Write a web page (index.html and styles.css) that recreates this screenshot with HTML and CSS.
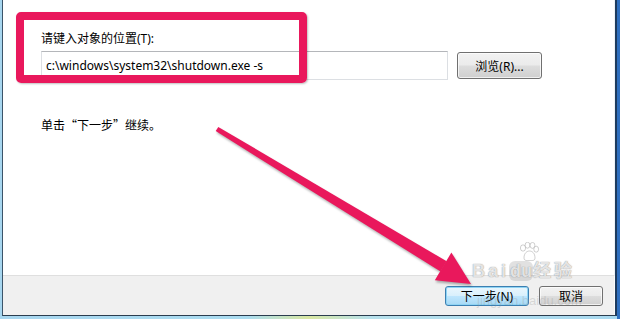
FILE: index.html
```html
<!DOCTYPE html>
<html lang="zh-CN">
<head>
    <meta charset="UTF-8">
    <title>创建快捷方式</title>
    <link rel="stylesheet" href="styles.css">
</head>
<body>
    <div class="screen">
        <div class="dialog">
            <div class="dialog-body">
                <div class="field-label">请键入对象的位置(T):</div>
                <div class="field-row">
                    <div class="textbox">c:\windows\system32\shutdown.exe -s</div>
                    <button class="btn btn-browse">浏览(R)...</button>
                </div>
                <p class="hint">单击“下一步”继续。</p>
            </div>
            <div class="dialog-footer">
                <button class="btn btn-default">下一步(N)</button>
                <button class="btn btn-cancel">取消</button>
            </div>
        </div>

        <!-- 标注 -->
        <div class="mark-box"></div>
        <svg class="mark-arrow" width="620" height="319" viewBox="0 0 620 319">
            <polygon points="215.7,131.1 218.3,126.9 446.7,261.3 440.5,271.5" />
            <polygon points="471,284 451.4,252.6 434.8,280.2" />
        </svg>

        <!-- 水印 -->
        <div class="watermark">
            <svg class="paw" width="22" height="20" viewBox="0 0 22 20">
                <ellipse cx="5" cy="6" rx="2.6" ry="3.2" />
                <ellipse cx="9.5" cy="3.2" rx="2.4" ry="3" />
                <ellipse cx="14.5" cy="3.4" rx="2.4" ry="3" />
                <ellipse cx="18.2" cy="7.2" rx="2.4" ry="3" />
                <path d="M6 16 C6 11 9 9 11.5 9 C14 9 17 11 17 16 C17 19 14 18.5 11.5 18.5 C9 18.5 6 19 6 16 Z" />
            </svg>
            <div class="wm-logo">Bai<span class="wm-du">du</span>经验</div>
            <div class="wm-url">jingyan.baidu.com</div>
        </div>
    </div>
</body>
</html>
```

FILE: styles.css
```css
* {
    box-sizing: border-box;
}

body {
    margin: 0;
    font-family: "Noto Sans", "Noto Sans CJK SC", sans-serif;
    font-size: 12px;
    color: #000;
}

.screen {
    position: relative;
    width: 620px;
    height: 319px;
    overflow: hidden;
    display: flex;
    padding: 0 0 3px 2px;
    border-right: 3px solid #2f6fbf;
    background: linear-gradient(90deg, #a7d6ef 0%, #aadcf0 40%, #d9e7a2 50%, #b7e1ec 60%, #a8d9f0 100%);
}

/* Dialog window */
.dialog {
    flex: 1;
    display: flex;
    flex-direction: column;
    background: #fff;
    border-left: 1px solid #3b5469;
    border-right: 2px solid #1d3b5e;
    border-bottom: 1px solid #2b3d4f;
}

.dialog-body {
    flex: 1;
    padding: 31px 0 0 38px;
    border-right: 1px solid #eef2f6;
}

.field-label {
    line-height: 16px;
    margin-bottom: 4px;
}

.field-row {
    display: flex;
    align-items: center;
    gap: 9px;
}

.textbox {
    width: 407px;
    height: 29px;
    display: flex;
    align-items: center;
    padding-left: 4px;
    border: 1px solid #dcdfe3;
    border-top-color: #b4b6ba;
    background: #fff;
    white-space: pre;
}

.hint {
    margin: 37px 0 0;
    line-height: 16px;
    font-family: "Noto Sans CJK SC", sans-serif;
}

.dialog-footer {
    height: 40px;
    display: flex;
    justify-content: flex-end;
    align-items: flex-start;
    gap: 10px;
    padding: 10px 11px 0 0;
    background: #f0f0f0;
    border-top: 1px solid #dfdfdf;
    border-right: 1px solid #fbfbfb;
}

/* Win7 style buttons */
.btn {
    font: inherit;
    color: #000;
    padding: 0;
    border: 1px solid #707070;
    border-radius: 3px;
    background: linear-gradient(180deg, #f2f2f2 0%, #ebebeb 48%, #dddddd 52%, #cfcfcf 100%);
    box-shadow: inset 0 0 0 1px rgba(255, 255, 255, 0.7);
}

.btn-browse {
    width: 85px;
    height: 27px;
}

.btn-default {
    width: 84px;
    height: 20px;
    border-color: #3c7fb1;
    background: linear-gradient(180deg, #eaf6fd 0%, #d9f0fc 48%, #bee6fd 52%, #a7d9f5 100%);
    box-shadow: inset 0 0 0 1px #8fd4f4;
}

.btn-cancel {
    width: 64px;
    height: 20px;
}

/* Annotations */
.mark-box {
    position: absolute;
    left: 16px;
    top: 12px;
    width: 291px;
    height: 71px;
    border: 8px solid #e9185c;
    border-radius: 5px;
    box-shadow: 1px 1px 2px rgba(0, 0, 0, 0.25);
}

.mark-arrow {
    position: absolute;
    left: 0;
    top: 0;
    fill: #e9185c;
    filter: drop-shadow(1px 2px 1px rgba(0, 0, 0, 0.3));
}

.watermark {
    position: absolute;
    left: 472px;
    top: 242px;
    width: 130px;
    color: rgba(255, 255, 255, 0.75);
    pointer-events: none;
}

.paw {
    display: block;
    margin-left: 46px;
    fill: rgba(255, 255, 255, 0.75);
    stroke: rgba(150, 150, 150, 0.45);
    stroke-width: 1;
}

.wm-logo {
    font-family: "Liberation Sans", "Noto Sans CJK SC", sans-serif;
    font-size: 18px;
    font-weight: bold;
    line-height: 18px;
    letter-spacing: 3px;
    text-shadow: 0 0 1px rgba(120, 120, 120, 0.6), 0 0 1px rgba(120, 120, 120, 0.6);
}

.wm-du {
    background: rgba(170, 170, 170, 0.35);
    border-radius: 6px;
    padding: 0 1px;
    letter-spacing: 0;
}

.wm-url {
    margin-top: 13px;
    margin-left: 5px;
    font-family: "Liberation Sans", sans-serif;
    font-size: 13px;
    color: rgba(150, 150, 150, 0.3);
}
```
